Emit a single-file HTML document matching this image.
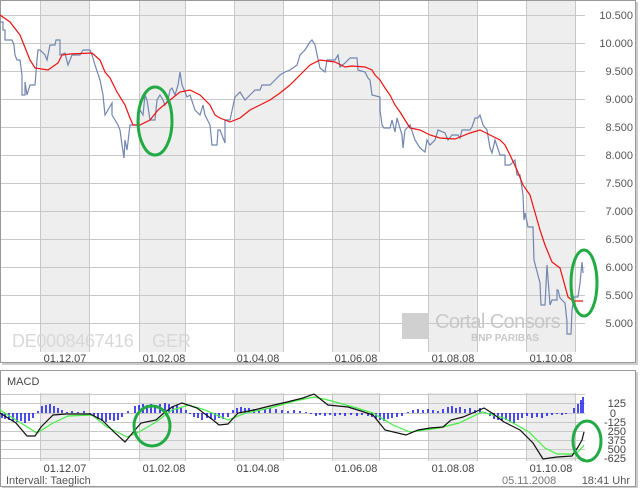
<!DOCTYPE html>
<html><head><meta charset="utf-8"><style>
html,body{margin:0;padding:0;background:#fff;width:640px;height:492px;overflow:hidden}
svg{display:block}
text{font-family:"Liberation Sans",sans-serif}
</style></head><body>
<svg width="640" height="492" viewBox="0 0 640 492" xmlns="http://www.w3.org/2000/svg">
<rect x="2" y="2" width="636" height="363" fill="#ccc"/>
<rect x="0.5" y="0.5" width="635" height="362" fill="#fff" stroke="#999"/>
<rect x="2" y="372" width="636" height="116" fill="#ccc"/>
<rect x="0.5" y="370.5" width="635" height="116" fill="#fff" stroke="#999"/>

<g fill="#eeeeee">
<rect x="40" y="1" width="49" height="351"/><rect x="139" y="1" width="46" height="351"/>
<rect x="234" y="1" width="49" height="351"/><rect x="332" y="1" width="47" height="351"/>
<rect x="428" y="1" width="49" height="351"/><rect x="526" y="1" width="49" height="351"/>
</g>
<g stroke="#c8c8c8" stroke-width="1">
<path d="M40.5 1V352M89.5 1V352M139.5 1V352M185.5 1V352M234.5 1V352M283.5 1V352M332.5 1V352M379.5 1V352M428.5 1V352M477.5 1V352M526.5 1V352M575.5 1V352"/>
<path d="M1 15.5H585M1 43.5H585M1 71.5H585M1 99.5H585M1 127.5H585M1 155.5H585M1 183.5H585M1 211.5H585M1 239.5H585M1 267.5H585M1 295.5H585M1 323.5H585"/>
</g>
<text x="12" y="347" font-size="18" fill="#d8d8d8" letter-spacing="-0.3">DE0008467416</text>
<text x="152" y="347" font-size="18" fill="#d8d8d8">GER</text>
<rect x="402" y="313" width="27" height="26" fill="#d0d0d0"/>
<text x="435" y="328" font-size="20" fill="#c8c8c8" letter-spacing="-0.6">Cortal Consors</text>
<text x="471" y="341" font-size="10" font-weight="bold" fill="#c8c8c8">BNP PARIBAS</text>

<polyline fill="none" stroke="#7186b0" stroke-width="1.2" points="0,22 3,22 3,30 5,30 5,40 12,40 14,45 15,55 17,60 20,60 22,75 22,95 25,95 25,82 27,95 30,85 35,85 37,60 38,50 40,50 45,55 47,60 50,45 55,45 56,40 60,40 60,55 65,53 68,65 72,55 80,55 83,50 90,50 92,55 95,65 100,80 103,95 105,115 108,110 112,103 112,115 115,120 118,125 120,130 122,145 124,158 125,140 127,150 130,125 137,125 140,110 143,115 145,95 147,100 150,120 155,120 157,100 160,95 163,100 165,105 168,100 170,90 172,88 175,95 178,85 180,72 182,85 185,92 187,97 190,95 195,110 200,115 203,105 205,115 210,125 212,145 217,145 218,130 220,130 225,143 225,120 230,120 235,97 240,92 245,100 250,95 255,90 260,90 262,85 270,85 275,80 280,75 285,72 290,70 293,68 297,65 300,55 305,50 310,42 312,40 315,45 320,68 325,72 327,60 335,60 338,55 340,67 345,63 350,58 357,58 358,70 365,72 368,78 370,80 372,95 380,97 380,110 382,125 384,128 390,128 392,120 395,132 397,118 402,135 403,148 405,130 410,125 415,140 420,148 425,152 427,140 430,145 435,140 438,130 445,133 448,140 452,135 458,135 460,138 462,130 470,130 472,127 475,118 478,118 480,115 483,125 487,130 490,148 492,153 495,140 500,155 505,155 505,165 510,165 515,160 517,175 520,175 523,195 524,220 525,213 528,227 533,227 534,260 540,283 541,305 545,305 547,265 550,305 552,300 557,300 557,290 558,290 560,298 565,303 567,322 567,334 571,334 572,310 574,297 578,297 580,283 582,262 583,273"/>
<polyline fill="none" stroke="#ee1111" stroke-width="1.2" points="0,15 10,22 20,35 24,45 30,60 35,68 48,70 58,63 62,55 70,54 92,53 100,60 105,72 110,78 117,92 125,105 130,118 133,125 140,125 150,120 158,110 170,100 180,92 190,90 200,95 210,105 215,115 220,118 230,122 240,118 250,110 260,105 270,100 280,93 290,85 300,75 310,65 320,60 335,62 345,67 352,66 365,67 372,70 375,75 380,80 385,88 390,95 395,105 400,112 405,120 410,128 420,130 430,135 440,138 455,139 460,137 470,133 480,130 490,135 500,140 505,145 510,155 517,170 523,185 530,195 540,230 545,245 552,262 560,268 568,297 573,301 583,301"/>
<g fill="none" stroke="#22aa44" stroke-width="3">
<ellipse cx="155" cy="121" rx="17" ry="34"/>
<ellipse cx="584" cy="283" rx="13" ry="33"/>
</g>
<g font-size="11" fill="#555" text-anchor="end">
<text x="633" y="19">10.500</text><text x="633" y="47">10.000</text><text x="633" y="75">9.500</text>
<text x="633" y="103">9.000</text><text x="633" y="131">8.500</text><text x="633" y="159">8.000</text>
<text x="633" y="187">7.500</text><text x="633" y="215">7.000</text><text x="633" y="243">6.500</text>
<text x="633" y="271">6.000</text><text x="633" y="299">5.500</text><text x="633" y="327">5.000</text>
</g>
<g font-size="11" fill="#444" text-anchor="middle">
<text x="65" y="362">01.12.07</text><text x="164" y="362">01.02.08</text><text x="258" y="362">01.04.08</text>
<text x="356" y="362">01.06.08</text><text x="453" y="362">01.08.08</text><text x="551" y="362">01.10.08</text>
</g>

<text x="7" y="385" font-size="11" fill="#444">MACD</text>
<g fill="#eeeeee">
<rect x="40" y="393" width="49" height="68"/><rect x="139" y="393" width="46" height="68"/>
<rect x="234" y="393" width="49" height="68"/><rect x="332" y="393" width="47" height="68"/>
<rect x="428" y="393" width="49" height="68"/><rect x="526" y="393" width="49" height="68"/>
</g>
<g stroke="#c8c8c8">
<path d="M40.5 393V461M89.5 393V461M139.5 393V461M185.5 393V461M234.5 393V461M283.5 393V461M332.5 393V461M379.5 393V461M428.5 393V461M477.5 393V461M526.5 393V461M575.5 393V461"/>
<path d="M1 394.5H585M1 403.5H585M1 413.5H585M1 422.5H585M1 431.5H585M1 440.5H585M1 449.5H585M1 458.5H585"/>
</g>
<path stroke="#0000ee" stroke-width="1.4" fill="none" d="M2 413V418M5 413V419M9 413V420M13 413V421M17 413V422M21 413V421M25 413V423M29 413V421M33 413V418M38 413V411M42 413V406M46 413V405M50 413V404M54 413V406M58 413V408M62 413V410M67 413V412M72 413V411M78 413V412M84 413V411M90 413V414M94 413V416M98 413V419M102 413V421M106 413V422M110 413V420M114 413V421M118 413V420M122 413V417M128 413V411M135 413V406M139 413V405M143 413V404M147 413V405M151 413V404M155 413V405M160 413V404M165 413V403M169 413V404M173 413V406M177 413V405M181 413V408M186 413V410M190 413V414M194 413V417M198 413V418M202 413V420M207 413V418M211 413V419M215 413V420M219 413V418M223 413V419M228 413V417M233 413V410M237 413V408M241 413V407M245 413V408M249 413V408M254 413V409M259 413V410M265 413V409M270 413V408M276 413V409M282 413V410M288 413V411M294 413V410M300 413V411M306 413V412M311 413V414M316 413V416M320 413V415M325 413V416M330 413V415M335 413V416M340 413V415M345 413V416M351 413V415M357 413V416M362 413V415M368 413V416M372 413V417M376 413V419M380 413V420M384 413V421M388 413V419M392 413V418M397 413V417M402 413V416M408 413V412M413 413V410M418 413V409M423 413V410M428 413V409M433 413V410M438 413V411M443 413V409M448 413V407M452 413V406M456 413V408M460 413V407M465 413V409M470 413V408M475 413V410M480 413V408M485 413V412M490 413V416M494 413V419M498 413V420M502 413V421M506 413V420M510 413V422M514 413V423M518 413V420M522 413V418M527 413V416M532 413V418M537 413V417M542 413V418M547 413V416M552 413V415M557 413V414M562 413V415M566 413V414M570 413V413M574 413V408M578 413V404M581 413V400M583 413V397"/>
<polyline fill="none" stroke="#44ee44" stroke-width="1.2" points="0,410 16,420 37,433 53,423 68,416 92,415 107,427 127,437 139,432 156,422 172,410 189,405 205,410 228,420 246,413 270,408 295,401 314,397 328,400 357,408 373,413 393,425 410,432 439,428 459,423 482,412 504,418 529,432 545,448 557,454 572,454 578,452 584,445"/>
<polyline fill="none" stroke="#111" stroke-width="1.2" points="0,413 16,423 27,436 35,436 41,427 53,415 66,414 90,414 102,420 115,433 125,442 135,430 141,423 156,420 164,413 172,407 182,403 197,408 213,420 219,425 228,424 238,413 254,410 270,406 287,402 303,398 314,394 328,405 348,407 361,411 373,415 385,430 406,435 418,430 430,428 443,427 451,420 463,417 475,412 484,408 492,413 504,422 520,430 533,443 543,459 557,457 572,456 578,447 582,440 584,432"/>
<g fill="none" stroke="#22aa44" stroke-width="3">
<ellipse cx="152" cy="426" rx="18" ry="20"/>
<ellipse cx="587" cy="441" rx="14" ry="20"/>
</g>
<g font-size="11" fill="#444" text-anchor="end">
<text x="626" y="407">125</text><text x="616" y="417">0</text><text x="626" y="426">-125</text>
<text x="626" y="435">250</text><text x="626" y="444">375</text><text x="626" y="453">500</text><text x="626" y="462">-625</text>
</g>
<g font-size="11" fill="#444" text-anchor="middle">
<text x="65" y="472">01.12.07</text><text x="164" y="472">01.02.08</text><text x="258" y="472">01.04.08</text>
<text x="356" y="472">01.06.08</text><text x="453" y="472">01.08.08</text><text x="551" y="472">01.10.08</text>
</g>
<text x="6" y="484" font-size="11" fill="#555">Intervall: Taeglich</text>
<text x="502" y="484" font-size="11" fill="#777">05.11.2008</text>
<text x="630" y="484" font-size="11" fill="#555" text-anchor="end">18:41 Uhr</text>
</svg>
</body></html>
